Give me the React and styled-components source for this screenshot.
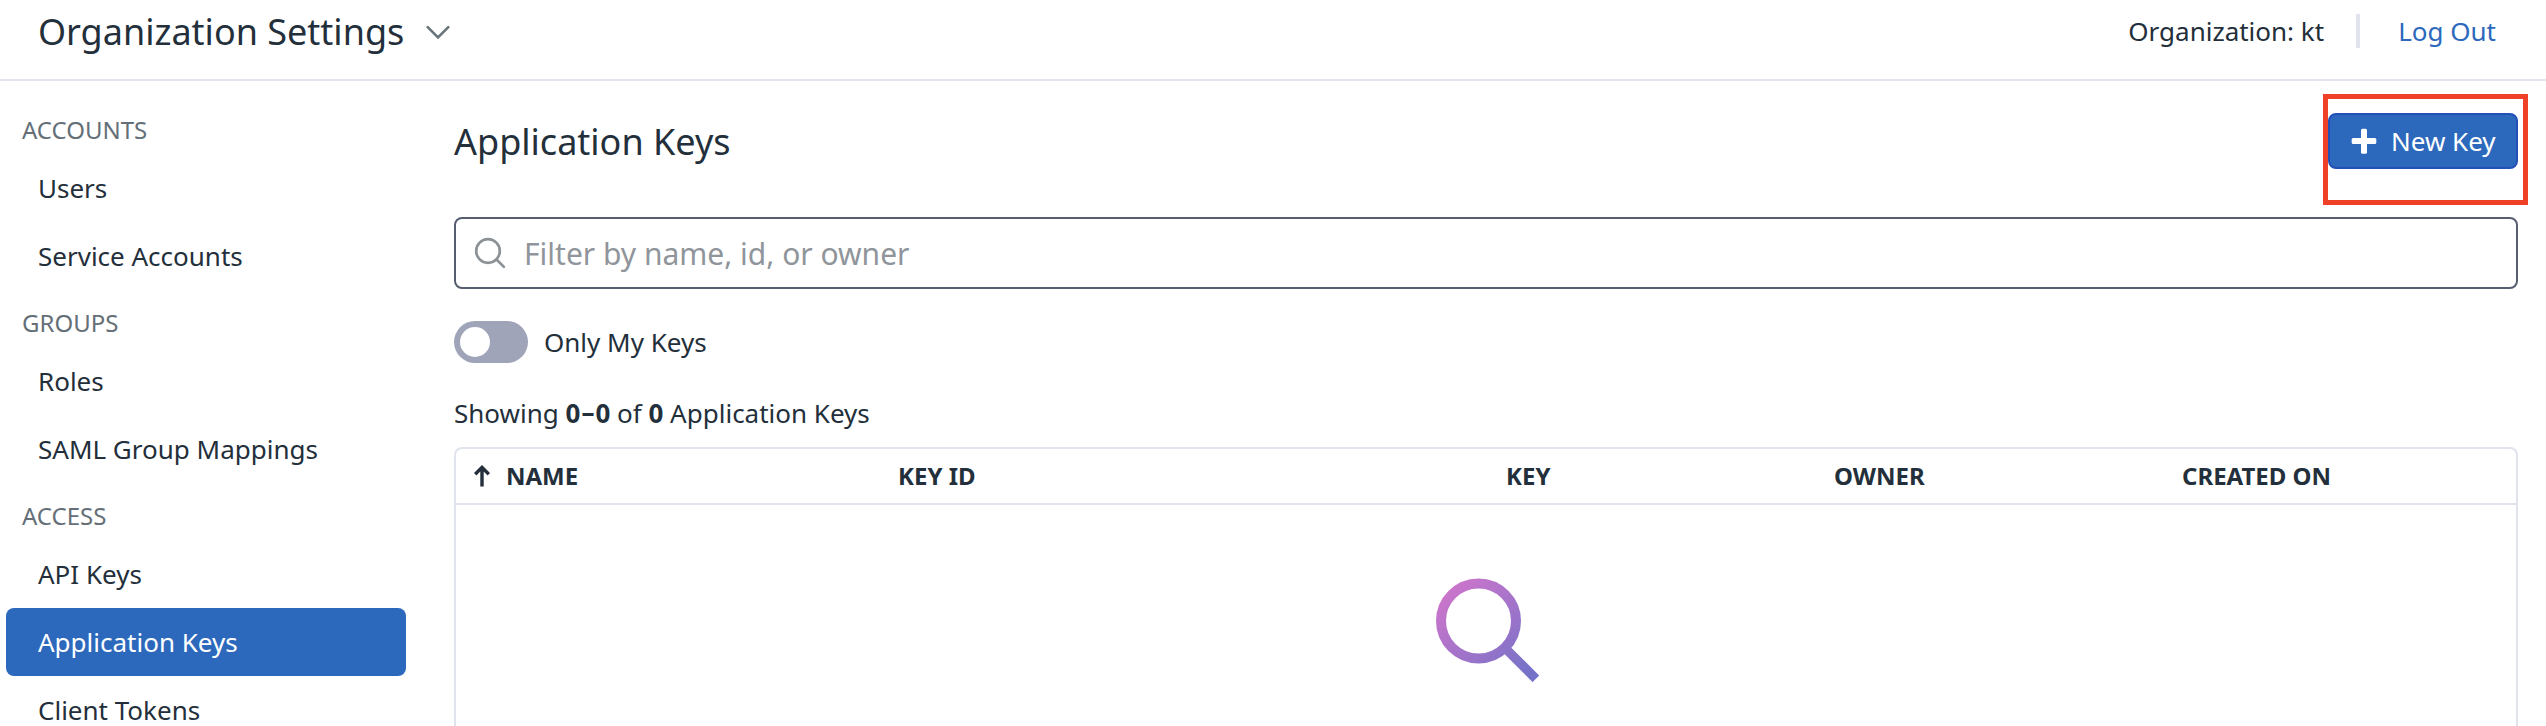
import React from "react";
import styled, { createGlobalStyle } from "styled-components";

const GlobalStyle = createGlobalStyle`
  * { box-sizing: border-box; }
  body {
    margin: 0;
    background: #fff;
    color: #232f3a;
    font-family: "Noto Sans", sans-serif;
    font-size: 26px;
    line-height: 36px;
    overflow: hidden;
  }
`;

const Page = styled.div`
  display: flex;
  flex-direction: column;
  height: 726px;
  overflow: hidden;
`;

const Header = styled.header`
  display: flex;
  flex: none;
  align-items: center;
  justify-content: space-between;
  height: 81px;
  padding: 0 50px 17px 38px;
  border-bottom: 2px solid #e1e4ed;
`;

const OrgSwitcher = styled.div`
  display: flex;
  align-items: center;
  gap: 22px;
  svg { margin-top: 3px; }
`;

const HeaderTitle = styled.h1`
  margin: 0;
  padding-top: 2px;
  font-size: 36px;
  font-weight: 400;
  line-height: 50px;
`;

const Account = styled.div`
  display: flex;
  align-items: center;
`;

const Divider = styled.span`
  width: 4px;
  height: 34px;
  margin: 0 38px 0 32px;
  background: #e1e4ed;
`;

const LogOut = styled.a`
  color: #2c69bd;
`;

const Body = styled.div`
  display: flex;
  flex: 1;
  min-height: 0;
`;

const Sidebar = styled.nav`
  flex: none;
  width: 454px;
  padding: 16px 48px 0 6px;
`;

const GroupTitle = styled.h2`
  margin: 0;
  height: 57px;
  padding: 8px 16px 0;
  color: #656f77;
  font-size: 24px;
  font-weight: 400;
  line-height: 50px;
`;

const NavItem = styled.a`
  display: flex;
  align-items: center;
  height: 68px;
  padding: 0 32px;
  border-radius: 8px;
  color: ${(p) => (p.$active ? "#fff" : "inherit")};
  background: ${(p) => (p.$active ? "#2c69bd" : "transparent")};
`;

const Main = styled.main`
  display: flex;
  flex: 1;
  flex-direction: column;
  padding: 32px 28px 0 0;
`;

const TitleBar = styled.div`
  display: flex;
  align-items: center;
  justify-content: space-between;
  height: 56px;
`;

const Title = styled.h2`
  margin: 0;
  padding-top: 2px;
  font-size: 36px;
  font-weight: 400;
  line-height: 50px;
`;

const ButtonWrap = styled.div`
  position: relative;
`;

const NewKeyButton = styled.button`
  display: flex;
  align-items: center;
  gap: 14px;
  width: 190px;
  height: 56px;
  padding: 0 0 0 21px;
  border: 2px solid #2350b8;
  border-radius: 8px;
  background: #2c69bd;
  color: #fff;
  font: inherit;
`;

const Highlight = styled.span`
  position: absolute;
  top: -19px;
  right: -10px;
  bottom: -36px;
  left: -5px;
  border: 5px solid #ee4128;
  pointer-events: none;
`;

const SearchField = styled.label`
  display: flex;
  align-items: center;
  gap: 18px;
  height: 72px;
  margin-top: 48px;
  padding: 0 18px;
  border: 2px solid #565e70;
  border-radius: 8px;
`;

const SearchInput = styled.input`
  flex: 1;
  padding: 2px 0 0;
  border: 0;
  outline: 0;
  background: none;
  font-family: inherit;
  font-size: 30px;
  line-height: 42px;
  &::placeholder { color: #8f959a; opacity: 1; }
`;

const ToggleRow = styled.div`
  display: flex;
  align-items: center;
  gap: 16px;
  height: 42px;
  margin-top: 32px;
`;

const Toggle = styled.span`
  display: flex;
  width: 74px;
  height: 42px;
  padding: 6px;
  border-radius: 21px;
  background: #9fa4b8;
`;

const Knob = styled.span`
  width: 30px;
  height: 30px;
  border-radius: 50%;
  background: #fff;
`;

const Summary = styled.p`
  margin: 32px 0 16px;
`;

const RangeDash = styled.span`
  display: inline-block;
  margin: -1px 1px 0;
  transform: translateY(-1px);
`;

const Table = styled.section`
  flex: 1;
  border: 2px solid #e1e4ed;
  border-bottom: 0;
  border-radius: 8px 8px 0 0;
`;

const TableHead = styled.div`
  display: grid;
  grid-template-columns: 424px 608px 328px 348px 1fr;
  align-items: center;
  height: 56px;
  padding-left: 18px;
  border-bottom: 2px solid #e1e4ed;
  font-size: 24px;
  font-weight: 700;
`;

const HeadCell = styled.div`
  display: flex;
  align-items: center;
  gap: 16px;
`;

const Empty = styled.div`
  display: flex;
  justify-content: center;
  padding: 73px 0 0 4px;
`;

const groups = [
  { title: "ACCOUNTS", items: ["Users", "Service Accounts"] },
  { title: "GROUPS", items: ["Roles", "SAML Group Mappings"] },
  { title: "ACCESS", items: ["API Keys", "Application Keys", "Client Tokens"] },
];

const Chevron = () => (
  <svg width="24" height="16" viewBox="0 0 24 16" fill="none" stroke="#6a747b" strokeWidth="2.6" strokeLinecap="round" strokeLinejoin="miter">
    <path d="M1.7 2.2 12 12.5 22.3 2.2" />
  </svg>
);

const SearchIcon = () => (
  <svg width="32" height="32" viewBox="0 0 32 32" fill="none" stroke="#8b9195" strokeWidth="2.7" strokeLinecap="round">
    <circle cx="14" cy="14" r="11.8" />
    <path d="m22.5 22.5 7.4 7.4" />
  </svg>
);

const PlusIcon = () => (
  <svg width="26" height="26" viewBox="0 0 26 26" fill="#fff">
    <rect x="10" y=".7" width="6" height="25" rx="1.5" />
    <rect x=".7" y="10" width="24.6" height="6" rx="1.5" />
  </svg>
);

const ArrowUp = () => (
  <svg width="16" height="22" viewBox="0 0 16 22" fill="none" stroke="#232f3a" strokeWidth="3.4">
    <path d="M8 21.5V3M1.2 9.3 8 2.4l6.8 6.9" />
  </svg>
);

const EmptyIcon = () => (
  <svg width="104" height="104" viewBox="0 0 104 104" fill="none">
    <defs>
      <linearGradient id="lens" gradientUnits="userSpaceOnUse" x1="14" y1="14" x2="92" y2="96">
        <stop offset="0" stopColor="#c975cb" />
        <stop offset="1" stopColor="#7472c8" />
      </linearGradient>
    </defs>
    <g stroke="url(#lens)">
      <circle cx="42.5" cy="43" r="37.5" strokeWidth="10" />
      <path d="m70 71 29.9 29.8" strokeWidth="9.4" />
    </g>
  </svg>
);

export default function App() {
  return (
    <Page>
      <GlobalStyle />
      <Header>
        <OrgSwitcher>
          <HeaderTitle>Organization Settings</HeaderTitle>
          <Chevron />
        </OrgSwitcher>
        <Account>
          <span>Organization: kt</span>
          <Divider />
          <LogOut>Log Out</LogOut>
        </Account>
      </Header>
      <Body>
        <Sidebar>
          {groups.map((group) => (
            <div key={group.title}>
              <GroupTitle>{group.title}</GroupTitle>
              {group.items.map((item) => (
                <NavItem key={item} $active={item === "Application Keys"}>{item}</NavItem>
              ))}
            </div>
          ))}
        </Sidebar>
        <Main>
          <TitleBar>
            <Title>Application Keys</Title>
            <ButtonWrap>
              <NewKeyButton><PlusIcon />New Key</NewKeyButton>
              <Highlight />
            </ButtonWrap>
          </TitleBar>
          <SearchField>
            <SearchIcon />
            <SearchInput placeholder="Filter by name, id, or owner" />
          </SearchField>
          <ToggleRow>
            <Toggle><Knob /></Toggle>
            <span>Only My Keys</span>
          </ToggleRow>
          <Summary>Showing <b>0<RangeDash>–</RangeDash>0</b> of <b>0</b> Application Keys</Summary>
          <Table>
            <TableHead>
              <HeadCell><ArrowUp />NAME</HeadCell>
              <HeadCell>KEY ID</HeadCell>
              <HeadCell>KEY</HeadCell>
              <HeadCell>OWNER</HeadCell>
              <HeadCell>CREATED ON</HeadCell>
            </TableHead>
            <Empty><EmptyIcon /></Empty>
          </Table>
        </Main>
      </Body>
    </Page>
  );
}
